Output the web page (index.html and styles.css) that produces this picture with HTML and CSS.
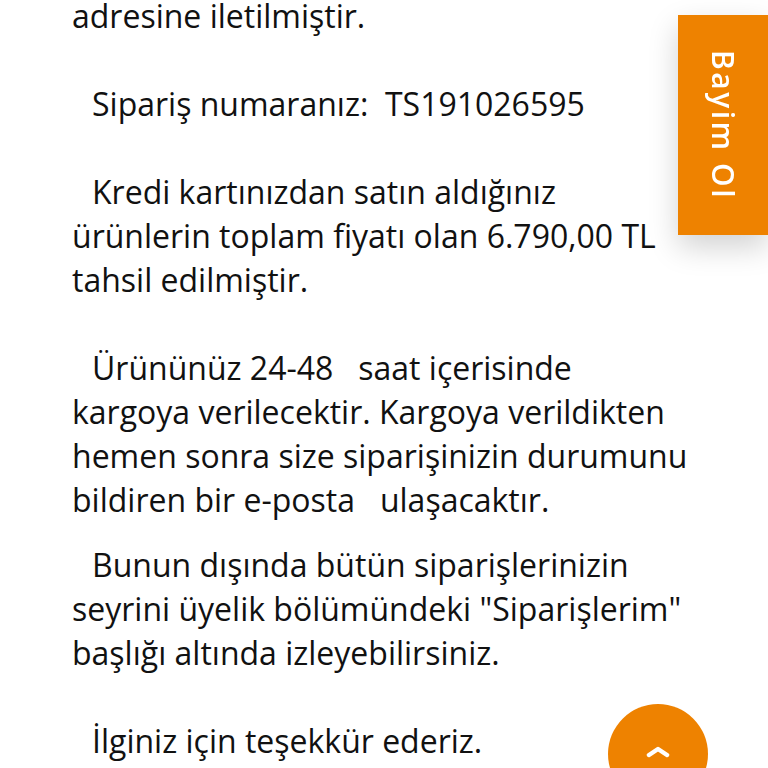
FILE: index.html
```html
<!DOCTYPE html>
<html lang="tr">
<head>
<meta charset="utf-8">
<link rel="stylesheet" href="styles.css">
</head>
<body>
<main class="content">
  <p class="line first">adresine iletilmiştir.</p>
  <p class="para blank">Sipariş numaranız:&nbsp; TS191026595</p>
  <p class="para blank">Kredi kartınızdan satın aldığınız<br>ürünlerin toplam fiyatı olan 6.790,00 TL<br>tahsil edilmiştir.</p>
  <p class="para blank">Ürününüz 24-48 &nbsp; saat içerisinde<br>kargoya verilecektir. Kargoya verildikten<br>hemen sonra size siparişinizin durumunu<br>bildiren bir e-posta &nbsp; ulaşacaktır.</p>
  <p class="para gap">Bunun dışında bütün siparişlerinizin<br>seyrini üyelik bölümündeki "Siparişlerim"<br>başlığı altında izleyebilirsiniz.</p>
  <p class="para blank">İlginiz için teşekkür ederiz.</p>
</main>
<a class="dealer-tab"><span class="dealer-text">Bayim Ol</span></a>
<a class="to-top" aria-label="Yukarı">
  <svg class="chevron" width="24" height="13" viewBox="0 0 24 13"><path d="M3 10 L12 4 L21 10" fill="none" stroke="#fff" stroke-width="4.5" stroke-linecap="round" stroke-linejoin="round"/></svg>
</a>
</body>
</html>
```
FILE: styles.css
```css
html, body {
  margin: 0;
  padding: 0;
  background: #ffffff;
}
body {
  font-family: "Open Sans", "Noto Sans", sans-serif;
  color: #111111;
  overflow: hidden;
  height: 768px;
}
.content {
  padding: 0 0 0 72px;
}
.line, .para {
  margin: 0;
  font-size: 32px;
  line-height: 44px;
  white-space: nowrap;
}
.first {
  margin-top: -6px;
}
.para {
  text-indent: 20px;
}
.blank {
  margin-top: 44px;
}
.gap {
  margin-top: 21px;
}
.dealer-tab {
  position: fixed;
  top: 15px;
  right: 0;
  width: 90px;
  height: 220px;
  background: #ee8200;
  box-shadow: 0 12px 30px rgba(0, 0, 0, 0.18);
  display: flex;
  align-items: center;
  justify-content: center;
}
.dealer-text {
  writing-mode: vertical-rl;
  color: #ffffff;
  font-family: "Open Sans", sans-serif;
  font-weight: 600;
  font-size: 30px;
  letter-spacing: 2.5px;
}
.to-top {
  position: fixed;
  left: 608px;
  top: 704px;
  width: 100px;
  height: 100px;
  border-radius: 50%;
  background: #ee8200;
  display: flex;
  justify-content: center;
  padding-top: 41px;
  box-sizing: border-box;
}
.chevron {
  display: block;
}
```
